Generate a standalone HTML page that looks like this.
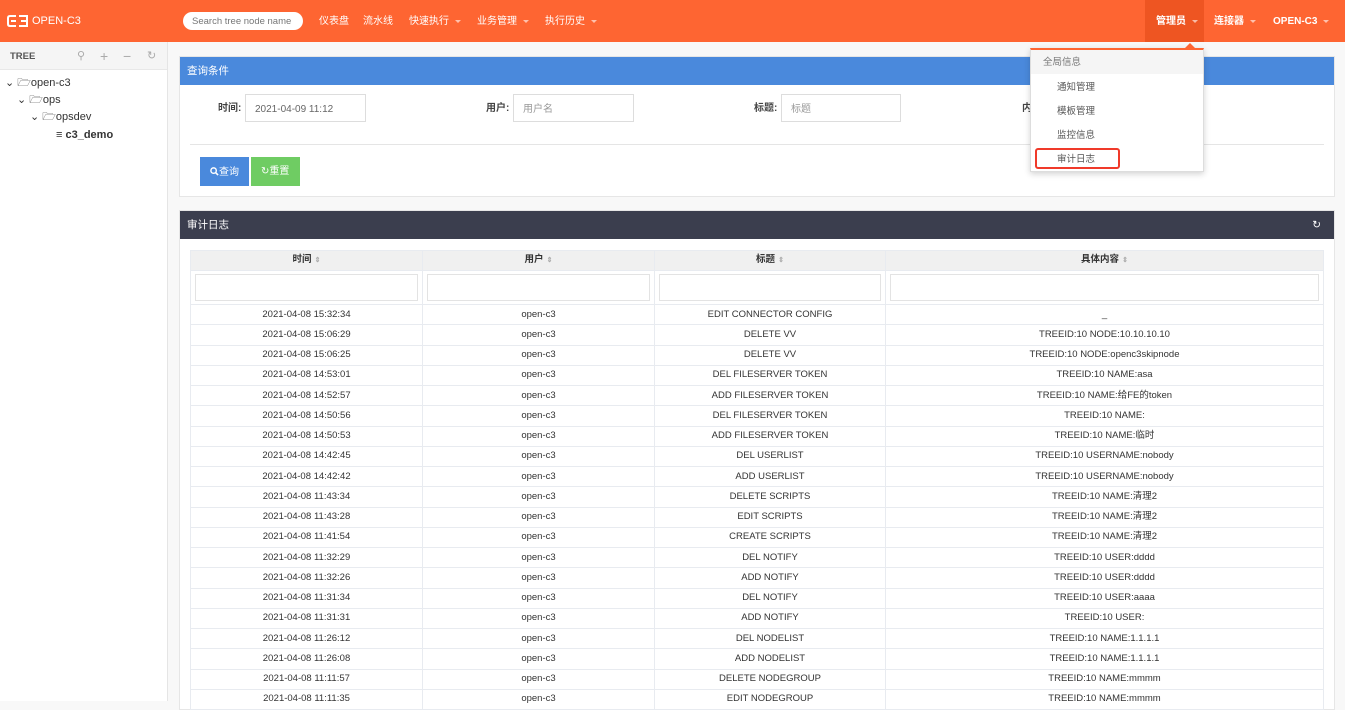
<!DOCTYPE html>
<html><head><meta charset="utf-8"><style>
*{box-sizing:border-box;margin:0;padding:0}
body{width:1345px;height:701px;overflow:hidden;background:#f8f8f8;font-family:"Liberation Sans","Noto Sans CJK SC",sans-serif;font-size:10px;color:#333;position:relative}
.nav{position:absolute;left:0;top:0;width:1345px;height:42px;background:#fe6532;color:#fff}
.nav span{position:absolute;top:17px;font-size:10px;line-height:10px;color:#fff}
.caret{display:inline-block;margin-left:6px;border-left:3px solid transparent;border-right:3px solid transparent;border-top:3px solid rgba(255,255,255,.6);vertical-align:middle}
.side{position:absolute;left:0;top:42px;width:168px;height:659px;background:#fff;border-right:1px solid #e5e5e5}
.sidehd{height:28px;background:#f5f5f5;border-bottom:1px solid #e8e8e8;position:relative}
.tree{position:absolute;font-size:11px;line-height:12px;color:#333}
.panel{position:absolute;left:179px;width:1156px;background:#fff;border:1px solid #e6e6e6}
.ph{height:28px;color:#fff;font-size:10.5px;line-height:12px;padding:8px 7px}
.lbl{position:absolute;top:104px;font-size:10px;line-height:10px;font-weight:bold;color:#444}
.inp{position:absolute;top:94px;height:28px;border:1px solid #ddd;background:#fff;font-size:10px;line-height:10px;color:#999;padding:10px 9px 0}
table{position:absolute;left:190px;top:250px;width:1133px;border-collapse:collapse;table-layout:fixed}
td,th{border:1px solid #e8ebf0;text-align:center;font-size:9.5px;line-height:10px;color:#333;font-weight:normal;height:20.25px;padding:0;white-space:nowrap;overflow:hidden}
th{background:#f0f0f0;font-weight:bold;height:20px}
.fr td{height:34px;padding:3px 4px}
.fr div{height:27px;border:1px solid #e3e3e3}
.srt{color:#aaa;font-size:7px;margin-left:3px}
.dd{position:absolute;left:1030px;top:48px;width:174px;height:124px;background:#fff;border:1px solid #ddd;border-top:2px solid #fe6532;box-shadow:0 2px 6px rgba(0,0,0,.18)}
.dd div{position:absolute;font-size:9.5px;line-height:10px;color:#555}
.btn{position:absolute;top:157px;width:49px;height:29px;color:#fff;font-size:10px;line-height:10px;padding:10px 0 0 10px;white-space:nowrap}
</style></head><body>
<div class="nav">
<svg style="position:absolute;left:7px;top:14px" width="22" height="14" viewBox="0 0 22 14"><path d="M9 2H3Q1 2 1 4V10Q1 12 3 12H9M4 7H9M12 2H20V12H12M14 7H20" stroke="#fff" stroke-width="2" fill="none"/></svg>
<span style="left:32px;top:16px;font-size:11px;line-height:11px">OPEN-C3</span>
<div style="position:absolute;left:183px;top:12px;width:120px;height:18px;background:#fff;border-radius:9px;color:#777;font-size:9.5px;line-height:10px;padding:5px 9px 0">Search tree node name</div>
<span style="left:319px">仪表盘</span><span style="left:363px">流水线</span>
<span style="left:409px">快速执行<i class="caret"></i></span>
<span style="left:477px">业务管理<i class="caret"></i></span>
<span style="left:545px">执行历史<i class="caret"></i></span>
<div style="position:absolute;left:1145px;top:0;width:59px;height:42px;background:#ee5522"></div>
<span style="left:1156px;font-weight:bold">管理员<i class="caret"></i></span>
<span style="left:1214px;font-weight:bold">连接器<i class="caret"></i></span>
<span style="left:1273px;font-weight:bold">OPEN-C3<i class="caret"></i></span>
</div>
<div class="side"><div class="sidehd">
<span style="position:absolute;left:10px;top:10px;font-weight:bold;color:#555;font-size:9.5px;line-height:10px">TREE</span>
<span style="position:absolute;left:77px;top:8px;color:#aaa;font-size:11px;line-height:12px">⚲</span>
<span style="position:absolute;left:100px;top:7px;color:#aaa;font-size:14px;line-height:14px">+</span>
<span style="position:absolute;left:123px;top:7px;color:#aaa;font-size:14px;line-height:14px">−</span>
<span style="position:absolute;left:147px;top:8px;color:#aaa;font-size:11px;line-height:12px">↻</span>
</div></div>
<div class="tree" style="left:5px;top:77px">⌄ 🗁open-c3</div>
<div class="tree" style="left:17px;top:94px">⌄ 🗁ops</div>
<div class="tree" style="left:30px;top:111px">⌄ 🗁opsdev</div>
<div class="tree" style="left:56px;top:129px;font-weight:bold">≡ c3_demo</div>

<div class="panel" style="top:56px;height:141px"><div class="ph" style="background:#4a89dc">查询条件</div>
<div style="position:absolute;left:10px;right:10px;top:87px;border-top:1px solid #e5e5e5"></div>
</div>
<div class="btn" style="left:200px;background:#4a89dc"><svg width="9" height="9" viewBox="0 0 10 10" style="vertical-align:-1px"><circle cx="4" cy="4" r="3" stroke="#fff" stroke-width="1.6" fill="none"/><path d="M6.2 6.2L9 9" stroke="#fff" stroke-width="1.8"/></svg>查询</div>
<div class="btn" style="left:251px;background:#6fcc63">↻重置</div>
<span class="lbl" style="left:218px">时间:</span><div class="inp" style="left:245px;width:121px;color:#666">2021-04-09 11:12</div>
<span class="lbl" style="left:486px">用户:</span><div class="inp" style="left:513px;width:121px">用户名</div>
<span class="lbl" style="left:754px">标题:</span><div class="inp" style="left:781px;width:120px">标题</div>
<span class="lbl" style="left:1022px">内</span>

<div class="panel" style="top:210px;height:500px"><div class="ph" style="background:#3b3e4e">审计日志<span style="float:right;margin-right:6px">↻</span></div></div>
<table>
<colgroup><col style="width:232px"><col style="width:232px"><col style="width:231px"><col style="width:438px"></colgroup>
<tr><th>时间<span class="srt">⇕</span></th><th>用户<span class="srt">⇕</span></th><th>标题<span class="srt">⇕</span></th><th>具体内容<span class="srt">⇕</span></th></tr>
<tr class="fr"><td><div></div></td><td><div></div></td><td><div></div></td><td><div></div></td></tr>
<tr><td>2021-04-08 15:32:34</td><td>open-c3</td><td>EDIT CONNECTOR CONFIG</td><td>_</td></tr>
<tr><td>2021-04-08 15:06:29</td><td>open-c3</td><td>DELETE VV</td><td>TREEID:10 NODE:10.10.10.10</td></tr>
<tr><td>2021-04-08 15:06:25</td><td>open-c3</td><td>DELETE VV</td><td>TREEID:10 NODE:openc3skipnode</td></tr>
<tr><td>2021-04-08 14:53:01</td><td>open-c3</td><td>DEL FILESERVER TOKEN</td><td>TREEID:10 NAME:asa</td></tr>
<tr><td>2021-04-08 14:52:57</td><td>open-c3</td><td>ADD FILESERVER TOKEN</td><td>TREEID:10 NAME:给FE的token</td></tr>
<tr><td>2021-04-08 14:50:56</td><td>open-c3</td><td>DEL FILESERVER TOKEN</td><td>TREEID:10 NAME:</td></tr>
<tr><td>2021-04-08 14:50:53</td><td>open-c3</td><td>ADD FILESERVER TOKEN</td><td>TREEID:10 NAME:临时</td></tr>
<tr><td>2021-04-08 14:42:45</td><td>open-c3</td><td>DEL USERLIST</td><td>TREEID:10 USERNAME:nobody</td></tr>
<tr><td>2021-04-08 14:42:42</td><td>open-c3</td><td>ADD USERLIST</td><td>TREEID:10 USERNAME:nobody</td></tr>
<tr><td>2021-04-08 11:43:34</td><td>open-c3</td><td>DELETE SCRIPTS</td><td>TREEID:10 NAME:清理2</td></tr>
<tr><td>2021-04-08 11:43:28</td><td>open-c3</td><td>EDIT SCRIPTS</td><td>TREEID:10 NAME:清理2</td></tr>
<tr><td>2021-04-08 11:41:54</td><td>open-c3</td><td>CREATE SCRIPTS</td><td>TREEID:10 NAME:清理2</td></tr>
<tr><td>2021-04-08 11:32:29</td><td>open-c3</td><td>DEL NOTIFY</td><td>TREEID:10 USER:dddd</td></tr>
<tr><td>2021-04-08 11:32:26</td><td>open-c3</td><td>ADD NOTIFY</td><td>TREEID:10 USER:dddd</td></tr>
<tr><td>2021-04-08 11:31:34</td><td>open-c3</td><td>DEL NOTIFY</td><td>TREEID:10 USER:aaaa</td></tr>
<tr><td>2021-04-08 11:31:31</td><td>open-c3</td><td>ADD NOTIFY</td><td>TREEID:10 USER:</td></tr>
<tr><td>2021-04-08 11:26:12</td><td>open-c3</td><td>DEL NODELIST</td><td>TREEID:10 NAME:1.1.1.1</td></tr>
<tr><td>2021-04-08 11:26:08</td><td>open-c3</td><td>ADD NODELIST</td><td>TREEID:10 NAME:1.1.1.1</td></tr>
<tr><td>2021-04-08 11:11:57</td><td>open-c3</td><td>DELETE NODEGROUP</td><td>TREEID:10 NAME:mmmm</td></tr>
<tr><td>2021-04-08 11:11:35</td><td>open-c3</td><td>EDIT NODEGROUP</td><td>TREEID:10 NAME:mmmm</td></tr>
</table>

<div class="dd">
<div style="left:0;top:0;width:172px;height:24px;background:#f5f5f5"></div>
<div style="left:12px;top:8px;color:#777">全局信息</div>
<div style="left:26px;top:33px">通知管理</div>
<div style="left:26px;top:57px">模板管理</div>
<div style="left:26px;top:81px">监控信息</div>
<div style="left:4px;top:98px;width:85px;height:21px;border:2px solid #f03a2a;border-radius:3px"></div>
<div style="left:26px;top:105px">审计日志</div>
</div>
<div style="position:absolute;left:1185px;top:43px;border-left:5px solid transparent;border-right:5px solid transparent;border-bottom:5px solid #fe6532"></div>
</body></html>
